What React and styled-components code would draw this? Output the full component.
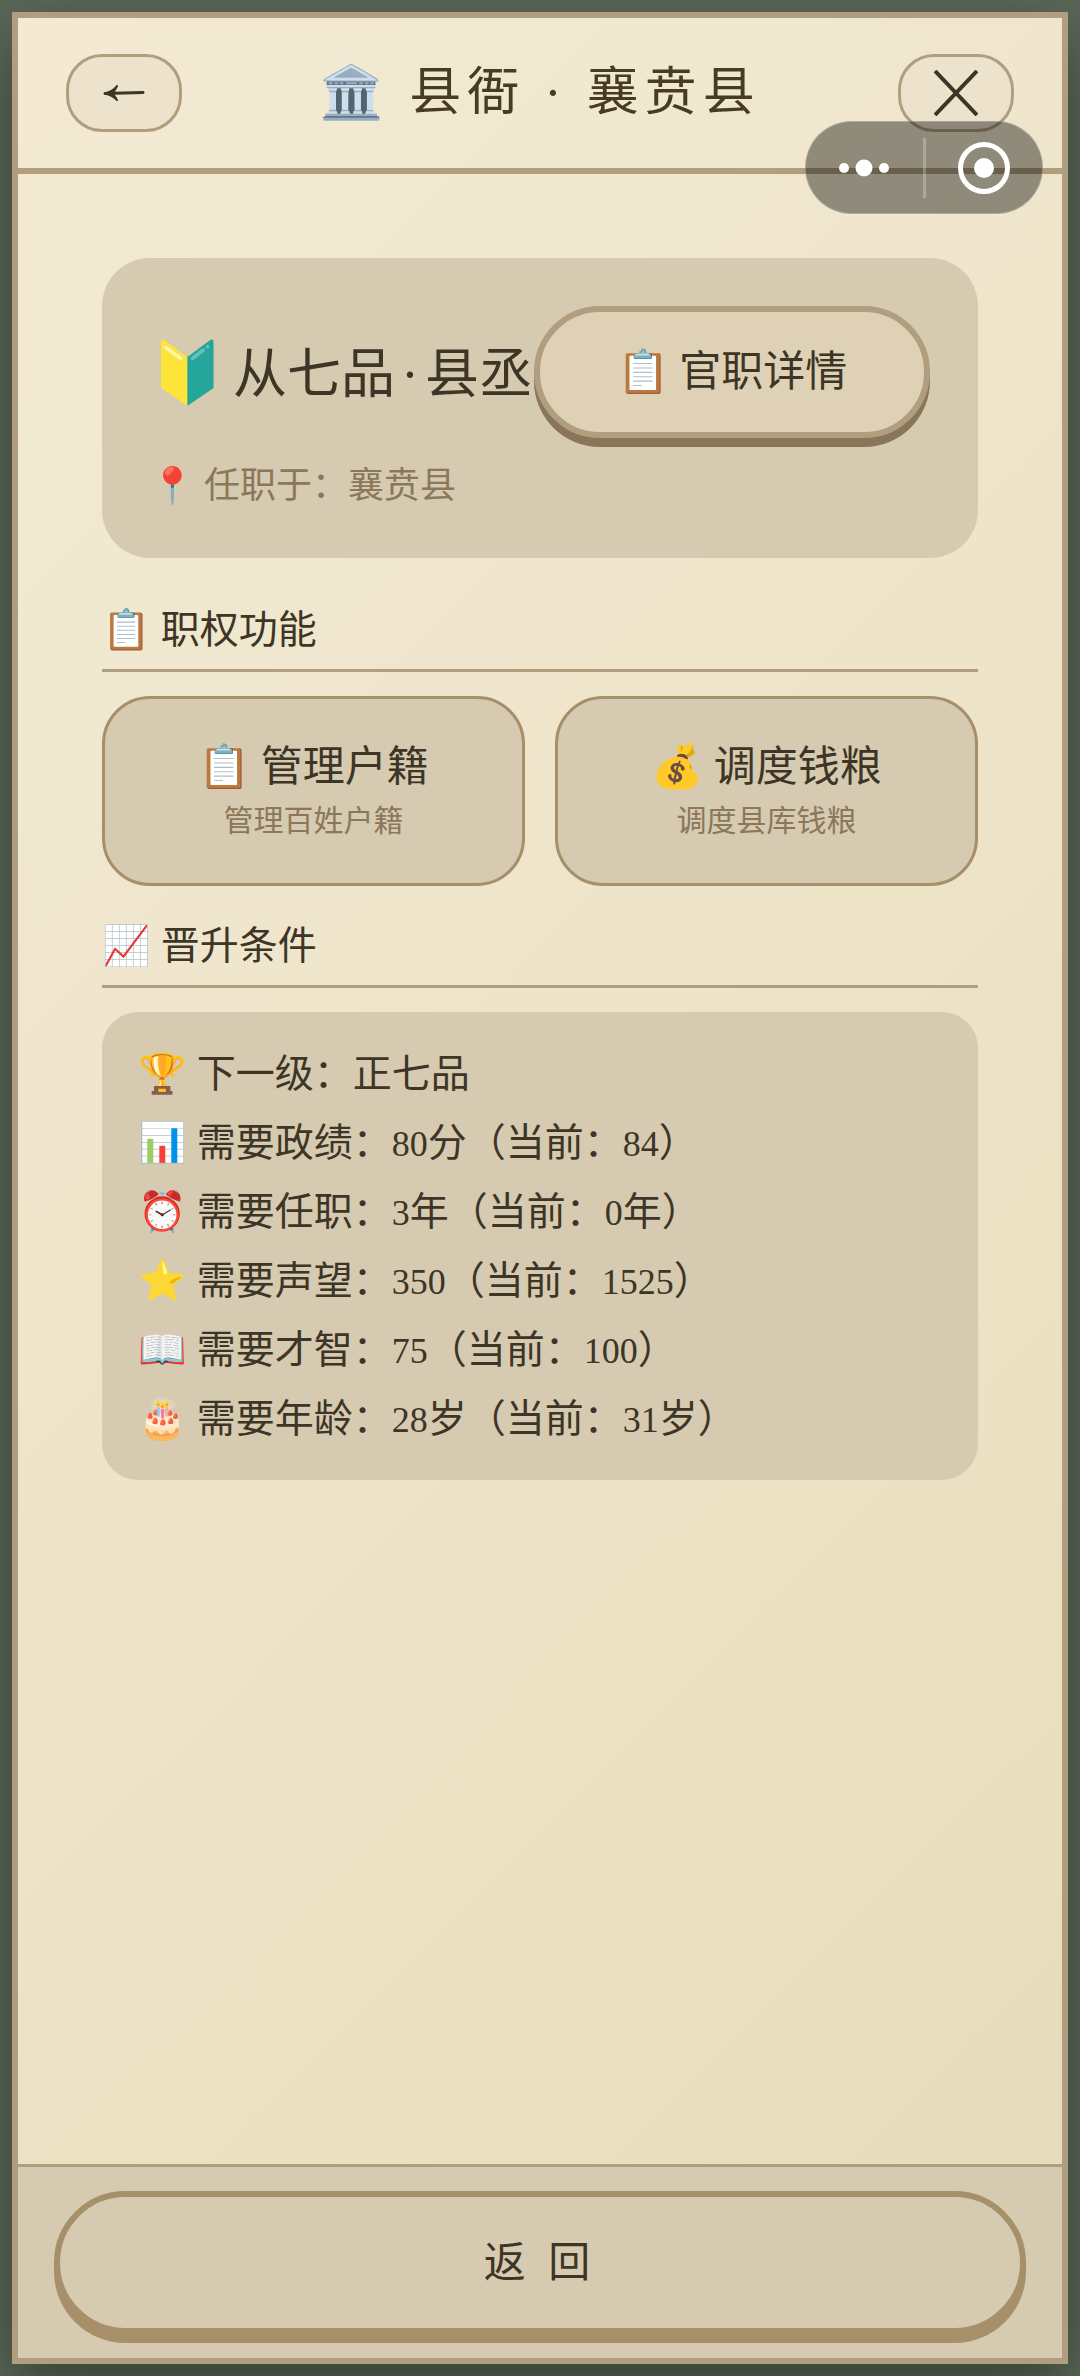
import React from 'react';
import styled, { createGlobalStyle } from 'styled-components';

const GlobalStyle = createGlobalStyle`
  * {
    box-sizing: border-box;
  }
  body {
    margin: 0;
    background: #5a6858;
    color: #3d3526;
    font-family: 'Liberation Serif', 'Noto Sans CJK SC', serif;
  }
  button {
    font-family: inherit;
    color: inherit;
    cursor: pointer;
  }
`;
const Page = styled.div`
  position: relative;
  display: flex;
  min-height: 100vh;
  padding: 12px;
`;
const Frame = styled.main`
  display: flex;
  flex-direction: column;
  flex: 1;
  min-width: 0;
  border: 6px solid #b09e7e;
  background: linear-gradient(135deg, #f4ead4, #f1e8d1 18%, #eee4c9 45%, #e9e0c0 80%, #e6dabb);
  box-shadow: 0 24px 60px rgba(0, 0, 0, 0.4);
`;
const Header = styled.header`
  display: flex;
  align-items: center;
  justify-content: space-between;
  height: 156px;
  padding: 0 48px;
  border-bottom: 6px solid #b09e7e;
`;
const IconButton = styled.button`
  display: flex;
  align-items: center;
  justify-content: center;
  width: 116px;
  height: 78px;
  padding: 0;
  border: 3px solid #b09e7e;
  border-radius: 36px;
  background: #ede2cc;
`;
const Title = styled.h1`
  margin: 0;
  font-size: 52px;
  font-weight: 400;
  line-height: 72px;
  letter-spacing: 6px;
  color: #483b26;
`;
const Content = styled.div`
  flex: 1;
  padding: 84px;
`;
const RankCard = styled.section`
  padding: 48px;
  border-radius: 48px;
  background: #d6cab0;
`;
const RankRow = styled.div`
  display: flex;
  align-items: center;
  margin-bottom: 24px;
`;
const Rank = styled.h2`
  flex: 1;
  min-width: 0;
  margin: 0;
  padding-top: 6px;
  font-size: 54px;
  font-weight: 400;
  line-height: 72px;
  white-space: nowrap;
`;
const Badge = styled.span`
  margin-right: 8px;
  font-size: 60px;
  line-height: 1;
`;
const Dot = styled.span`
  padding: 0 6px;
`;
const DetailButton = styled.button`
  flex-shrink: 0;
  width: 396px;
  height: 132px;
  border: 6px solid #b09e7e;
  border-radius: 66px;
  background: #ded1b5;
  box-shadow: 0 9px 0 #88755a;
  font-size: 42px;
  line-height: 60px;
`;
const Place = styled.p`
  margin: 0;
  font-size: 36px;
  line-height: 48px;
  color: #8b7759;
`;
const SectionTitle = styled.h3`
  margin: ${(props) => (props.$wide ? 45 : 33)}px 0 24px;
  padding-bottom: 12px;
  border-bottom: 3px solid #b09e7e;
  font-size: 39px;
  font-weight: 400;
  line-height: 54px;
`;
const Actions = styled.div`
  display: grid;
  grid-template-columns: 1fr 1fr;
  gap: 30px;
`;
const Action = styled.button`
  display: flex;
  flex-direction: column;
  align-items: center;
  padding: 38px 24px;
  border: 3px solid #a68f69;
  border-radius: 48px;
  background: #d6cab0;
`;
const ActionName = styled.span`
  font-size: 42px;
  line-height: 60px;
`;
const ActionNote = styled.span`
  font-size: 30px;
  line-height: 48px;
  color: #8b7759;
`;
const Needs = styled.ul`
  margin: 0;
  padding: 27px 36px;
  border-radius: 36px;
  background: #d6cab0;
  list-style: none;
`;
const Need = styled.li`
  font-size: 39px;
  line-height: 69px;
`;
const Num = styled.span`
  font-size: 36px;
  line-height: 1;
`;
const Footer = styled.footer`
  padding: 24px 36px;
  border-top: 3px solid #b09e7e;
  background: #d6cab0;
`;
const ReturnButton = styled.button`
  display: block;
  width: 100%;
  height: 143px;
  border: 6px solid #a68f69;
  border-radius: 72px;
  background: #d6cab0;
  box-shadow: 0 9px 0 #a68f69;
  font-size: 42px;
  line-height: 60px;
  letter-spacing: 6px;
`;
const Capsule = styled.div`
  position: absolute;
  top: 121px;
  right: 37px;
  display: flex;
  align-items: center;
  width: 238px;
  height: 93px;
  border: 1px solid rgba(255, 255, 255, 0.25);
  border-radius: 47px;
  background: rgba(0, 0, 0, 0.4);
`;
const CapsuleButton = styled.button`
  display: flex;
  flex: 1;
  align-items: center;
  justify-content: center;
  height: 60px;
  padding: 0;
  border: 0;
  background: none;
`;
const Divider = styled.span`
  width: 3px;
  height: 60px;
  background: rgba(255, 255, 255, 0.25);
`;

const needs = [
  { icon: '🏆', label: '下一级：', parts: ['正七品'] },
  { icon: '📊', label: '需要政绩：', parts: [80, '分（当前：', 84, '）'] },
  { icon: '⏰', label: '需要任职：', parts: [3, '年（当前：', 0, '年）'] },
  { icon: '⭐', label: '需要声望：', parts: [350, '（当前：', 1525, '）'] },
  { icon: '📖', label: '需要才智：', parts: [75, '（当前：', 100, '）'] },
  { icon: '🎂', label: '需要年龄：', parts: [28, '岁（当前：', 31, '岁）'] },
];

export default function App() {
  return (
    <Page>
      <GlobalStyle />
      <Frame>
        <Header>
          <IconButton aria-label='后退'>
            <svg width='44' height='20' viewBox='0 0 44 20' fill='none' stroke='#3d3526' strokeWidth='3' strokeLinecap='round'>
              <path d='M3 10.5L41 9.5' />
              <path d='M15 3Q11 8 3 10.5Q10 12 15 17L11 10.5Z' fill='#3d3526' strokeWidth='2' strokeLinejoin='round' />
            </svg>
          </IconButton>
          <Title>🏛️ 县衙 · 襄贲县</Title>
          <IconButton aria-label='关闭'>
            <svg width='44' height='46' viewBox='0 0 44 46' fill='none' stroke='#3d3526' strokeWidth='4'>
              <path d='M1 1L43 45M43 1L1 45' />
            </svg>
          </IconButton>
        </Header>
        <Content>
          <RankCard>
            <RankRow>
              <Rank>
                <Badge>🔰</Badge>从七品<Dot>·</Dot>县丞
              </Rank>
              <DetailButton>📋 官职详情</DetailButton>
            </RankRow>
            <Place>📍 任职于：襄贲县</Place>
          </RankCard>
          <SectionTitle $wide>📋 职权功能</SectionTitle>
          <Actions>
            <Action>
              <ActionName>📋 管理户籍</ActionName>
              <ActionNote>管理百姓户籍</ActionNote>
            </Action>
            <Action>
              <ActionName>💰 调度钱粮</ActionName>
              <ActionNote>调度县库钱粮</ActionNote>
            </Action>
          </Actions>
          <SectionTitle>📈 晋升条件</SectionTitle>
          <Needs>
            {needs.map((need) => (
              <Need key={need.label}>
                {need.icon} {need.label}
                {need.parts.map((part, i) => (typeof part === 'number' ? <Num key={i}>{part}</Num> : part))}
              </Need>
            ))}
          </Needs>
        </Content>
        <Footer>
          <ReturnButton>返 回</ReturnButton>
        </Footer>
      </Frame>
      <Capsule>
        <CapsuleButton aria-label='更多'>
          <svg width='52' height='20' viewBox='0 0 52 20' fill='#fff'>
            <circle cx='6' cy='10' r='5' />
            <circle cx='26' cy='10' r='8.5' />
            <circle cx='46' cy='10' r='5' />
          </svg>
        </CapsuleButton>
        <Divider />
        <CapsuleButton aria-label='退出'>
          <svg width='52' height='52' viewBox='0 0 52 52'>
            <circle cx='26' cy='26' r='23.5' fill='none' stroke='#fff' strokeWidth='5' />
            <circle cx='26' cy='26' r='10' fill='#fff' />
          </svg>
        </CapsuleButton>
      </Capsule>
    </Page>
  );
}
